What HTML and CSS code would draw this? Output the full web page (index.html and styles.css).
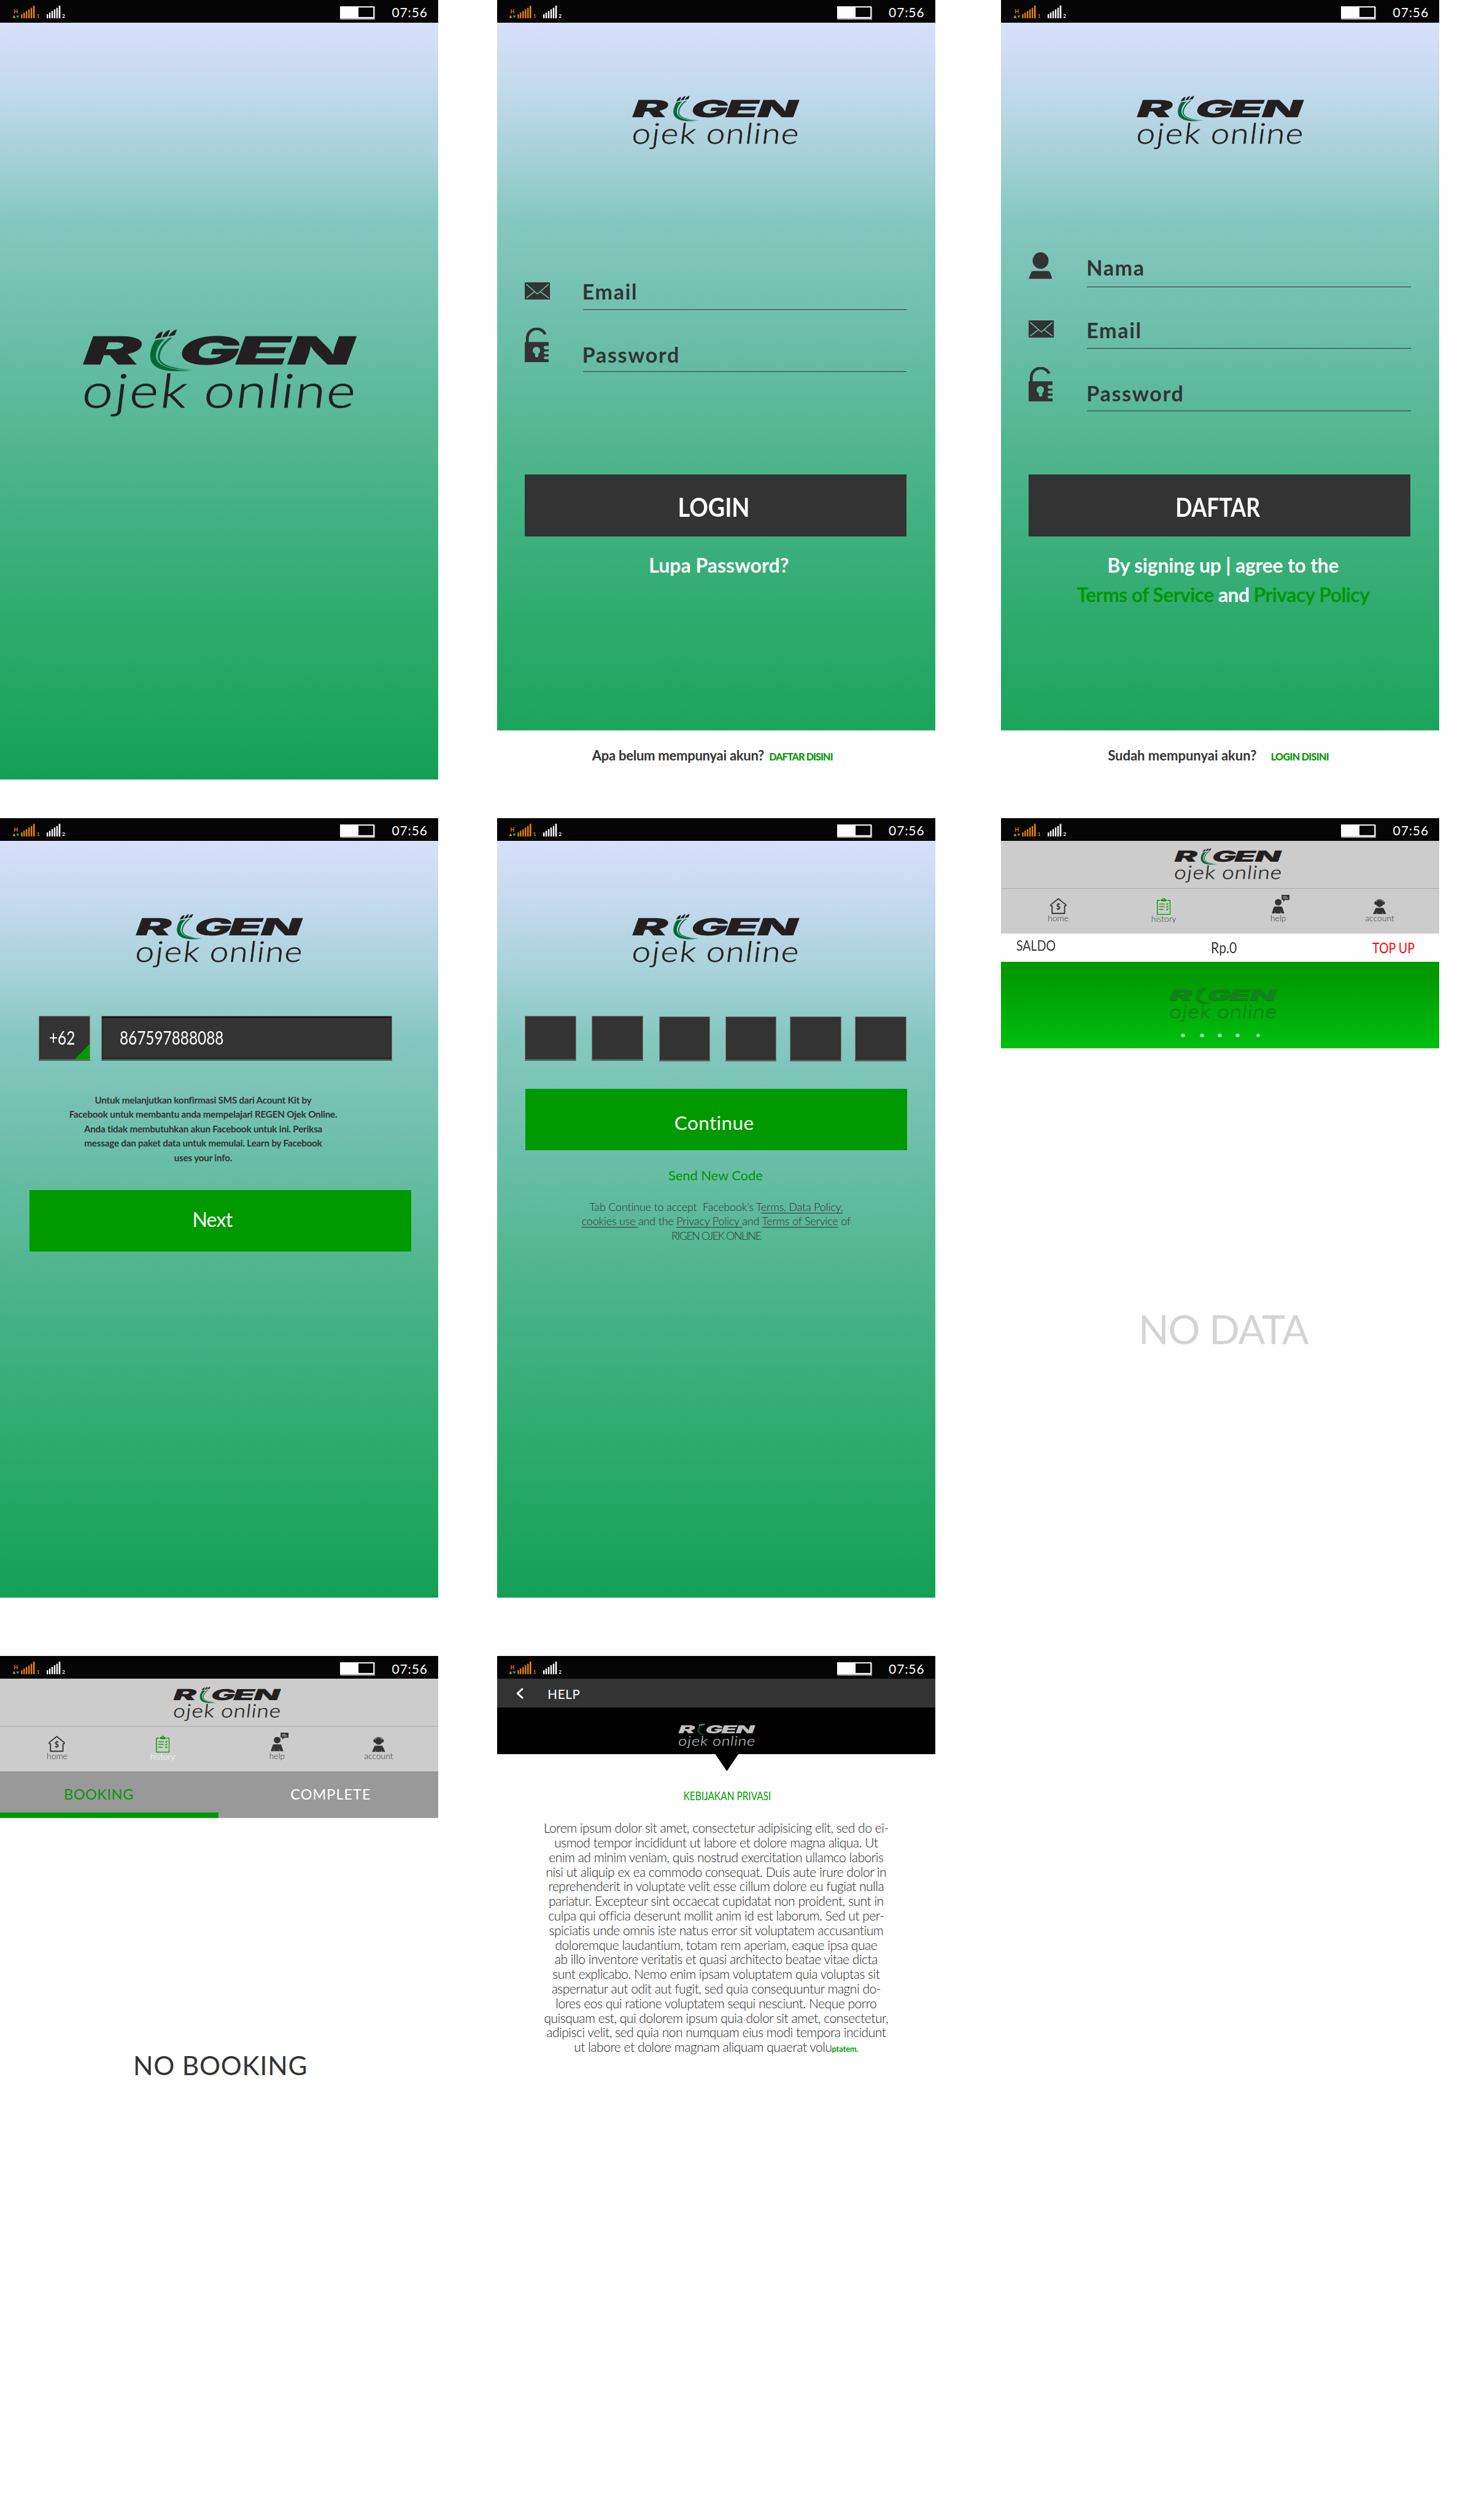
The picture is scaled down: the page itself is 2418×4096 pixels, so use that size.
FILE: index.html
```html
<!DOCTYPE html>
<html lang="id">
<head>
<meta charset="utf-8">
<title>RIGEN Ojek Online</title>
<link rel="stylesheet" href="styles.css">
</head>
<body>
<svg class="defs" aria-hidden="true">
  <symbol id="logo" viewBox="24.8 32.5 674.5 215.5" overflow="visible">
    <g class="logo-word">
      <text transform="translate(14.5 118.7) skewX(-20) scale(2.28 1)">R</text>
      <text transform="translate(251 118.7) skewX(-20) scale(2.1 1)">G</text>
      <text transform="translate(389.6 118.7) skewX(-20) scale(2.31 1)">E</text>
      <text transform="translate(518.2 118.7) skewX(-20) scale(2.25 1)">N</text>
    </g>
    <g transform="scale(.4591 .3333)">
      <path fill="currentColor" d="M440 166Q455 118 483 111L473 156ZM479 155Q497 105 523 99L507 147ZM514 148Q532 103 559 98L547 138Z"/>
      <path class="logo-foot" d="M444 175L494 167Q448 220 446 290Q446 394 640 401Q600 404 560 405Q415 405 415 290Q416 230 444 175ZM516 160L536 155Q470 220 466 298Q466 380 640 394Q456 395 456 295Q460 220 516 160Z"/>
    </g>
    <g class="logo-sub">
      <text transform="translate(20 225) skewX(-7) scale(1.17 1)" textLength="219">ojek</text>
      <text transform="translate(320 225) skewX(-7) scale(1.17 1)" textLength="318">online</text>
    </g>
  </symbol>
  <symbol id="signal" viewBox="25 12 140 36" overflow="visible">
    <text x="33.4" y="33" class="sig" font-size="13" fill="#ea8408" textLength="10" lengthAdjust="spacingAndGlyphs">H</text>
    <path fill="#ea8408" d="M30 44l4-7 4 7zM51.2 35h3.6v10h-3.6zM57 31h3.6v14H57zM63 27h3.6v18H63zM69 23h3.6v22H69zM75 19h3.6v26H75zM80.9 14h4v31h-4z"/>
    <path fill="#14b45a" d="M39 38h8l-4 7z"/>
    <text x="89.5" y="44" class="sig" font-size="12" fill="#ea8408">1</text>
    <path fill="#fff" d="M114.3 35h3.6v10h-3.6zM120.1 31h3.6v14h-3.6zM126.1 27h3.6v18h-3.6zM132.1 23h3.6v22h-3.6zM138.1 19h3.6v26h-3.6zM144 14h4v31h-4z"/>
    <text x="152.5" y="44" class="sig" font-size="12" fill="#fff">2</text>
  </symbol>
  <symbol id="battery" viewBox="836 13 88 36">
    <path fill="#8a8a8a" d="M838 16h86v32h-86z"/>
    <path fill="#fdfdfd" d="M837.5 15h84.5v30h-84.5z"/>
    <path fill="#050505" d="M883 18h36.5v23.5H883z"/>
  </symbol>
  <symbol id="mail" viewBox="0 0 89 60">
    <rect width="89" height="60" rx="2" fill="#333"/>
    <path d="M6 7L44.5 41L83 7M6 54L34 33M83 54L55 33" fill="none" stroke="#74c0b1" stroke-width="3.2" stroke-linecap="round"/>
  </symbol>
  <symbol id="lock" viewBox="0 0 84 121">
    <path d="M9 52V38A33 33 0 0 1 72 23" fill="none" stroke="#333" stroke-width="10"/>
    <path fill="#333" fill-rule="evenodd" d="M2 50H82Q84 50 84 52V64H72Q67 64 67 70T72 76H84V83H72Q67 83 67 88T72 93H84V101H72Q67 101 67 106T72 111H84V121H0V52Q0 50 2 50ZM36 92Q28 88 28 80A13 13 0 0 1 54 80Q54 88 48 92V99Q48 104 42 104T36 99Z"/>
  </symbol>
  <symbol id="person" viewBox="0 0 83 94">
    <ellipse cx="42" cy="29" rx="28" ry="29" fill="#333"/>
    <path fill="#333" d="M0 94L8 73Q11 66 18 66H66Q73 66 76 73L83 94Z"/>
  </symbol>
  <symbol id="home" viewBox="0 0 58 57" overflow="visible">
    <path d="M7 54.5V29L2.5 27.5V24L29 2.7L55.5 24V27.5L51 29V54.5Z" fill="none" stroke="#333" stroke-width="4" stroke-linejoin="round"/>
    <text x="29" y="42" text-anchor="middle" class="sig" font-size="27" fill="#333">$</text>
  </symbol>
  <symbol id="history" viewBox="0 0 48 59">
    <path d="M11 8.5H1.5V57.5H46.5V8.5H37" fill="none" stroke="#090" stroke-width="3"/>
    <path fill="#090" fill-rule="evenodd" d="M14 5H19Q20 0 24 0T29 5H34V9Q34 12 30 12H18Q14 12 14 9ZM22 4.5a2 2 0 1 0 4 0a2 2 0 1 0-4 0Z"/>
    <path d="M8 21H28M8 30.5H28M8 40H23M33 20l3 3 4-5M33 29.5l3 3 4-5M33 39l3 3 4-5" fill="none" stroke="#090" stroke-width="2.6"/>
  </symbol>
  <symbol id="help" viewBox="0 0 63 66">
    <ellipse cx="23" cy="26" rx="12" ry="11.5" fill="#333"/>
    <path fill="#333" d="M11 41H34Q37 41 38 45L45 66H34L31.5 56V66H13V56L11 66H0L7 45Q8 41 11 41ZM35 0H63V18H47L41 25V18H35Z"/>
    <path d="M40 6.5H53M40 11.5H58" stroke="#ccc" stroke-width="2.2"/>
  </symbol>
  <symbol id="account" viewBox="0 0 47 55">
    <ellipse cx="23.5" cy="17" rx="13" ry="12.5" fill="#333"/>
    <path d="M8 12A16 11.500 0 0 1 39 12" fill="none" stroke="#333" stroke-width="2"/>
    <path fill="#333" d="M11 9.5Q5 10 5 15.5T11 22ZM36 9.5Q42 10 42 15.5T36 22ZM12 33H35Q38 33 39 37L47 55H36L33.5 47V55H13.5V47L11 55H0L8 37Q9 33 12 33Z"/>
  </symbol>
</svg>

<main class="board">
  <section class="screen sky">
    <div class="status"><svg class="signal"><use href="#signal"/></svg><svg class="battery"><use href="#battery"/></svg><time>07:56</time></div>
    <svg class="logo logo-splash"><use href="#logo"/></svg>
  </section>

  <section class="screen sky">
    <div class="status"><svg class="signal"><use href="#signal"/></svg><svg class="battery"><use href="#battery"/></svg><time>07:56</time></div>
    <svg class="logo logo-top"><use href="#logo"/></svg>
    <form class="form login-form">
      <div class="row row-a"><svg class="mail"><use href="#mail"/></svg><label>Email</label></div>
      <div class="row row-b"><svg class="lock"><use href="#lock"/></svg><label>Password</label></div>
    </form>
    <div class="btn btn-dark login-btn"><span class="squeeze-90">LOGIN</span></div>
    <p class="forgot">Lupa Password?</p>
    <footer class="foot foot-login"><span>Apa belum mempunyai akun?</span><b>DAFTAR DISINI</b></footer>
  </section>

  <section class="screen sky">
    <div class="status"><svg class="signal"><use href="#signal"/></svg><svg class="battery"><use href="#battery"/></svg><time>07:56</time></div>
    <svg class="logo logo-top"><use href="#logo"/></svg>
    <form class="form signup-form">
      <div class="row row-c"><svg class="person"><use href="#person"/></svg><label>Nama</label></div>
      <div class="row row-d"><svg class="mail"><use href="#mail"/></svg><label>Email</label></div>
      <div class="row row-e"><svg class="lock"><use href="#lock"/></svg><label>Password</label></div>
    </form>
    <div class="btn btn-dark signup-btn"><span class="squeeze-88">DAFTAR</span></div>
    <p class="agree">By signing up | agree to the<br><span class="links"><i>Terms of Service</i> and <i>Privacy Policy</i></span></p>
    <footer class="foot foot-signup"><span>Sudah mempunyai akun?</span><b>LOGIN DISINI</b></footer>
  </section>

  <section class="screen sky">
    <div class="status"><svg class="signal"><use href="#signal"/></svg><svg class="battery"><use href="#battery"/></svg><time>07:56</time></div>
    <svg class="logo logo-top"><use href="#logo"/></svg>
    <div class="phone">
      <div class="box code"><span>+62</span></div>
      <div class="box number"><span>867597888088</span></div>
    </div>
    <p class="note">Untuk melanjutkan konfirmasi SMS dari Acount Kit by<br>Facebook untuk membantu anda mempelajari REGEN Ojek Online.<br>Anda tidak membutuhkan akun Facebook untuk ini. Periksa<br>message dan paket data untuk memulai. Learn by Facebook<br>uses your info.</p>
    <div class="btn btn-green next-btn">Next</div>
  </section>

  <section class="screen sky">
    <div class="status"><svg class="signal"><use href="#signal"/></svg><svg class="battery"><use href="#battery"/></svg><time>07:56</time></div>
    <svg class="logo logo-top"><use href="#logo"/></svg>
    <div class="pins"><div class="box"></div><div class="box"></div><div class="box"></div><div class="box"></div><div class="box"></div><div class="box"></div></div>
    <div class="btn btn-green continue-btn">Continue</div>
    <p class="resend">Send New Code</p>
    <p class="terms">Tab Continue to accept&nbsp; Facebook’s T<u>erms, Data Policy,</u><br><u>cookies use </u>and the <u>Privacy Policy </u>and <u>Terms of Service</u> of<br><span class="tight">RIGEN OJEK ONLINE</span></p>
  </section>

  <section class="screen">
    <div class="status"><svg class="signal"><use href="#signal"/></svg><svg class="battery"><use href="#battery"/></svg><time>07:56</time></div>
    <header class="brand"><svg class="logo"><use href="#logo"/></svg></header>
    <nav class="tabs-nav">
      <div class="item home"><svg><use href="#home"/></svg>home</div>
      <div class="item history"><svg><use href="#history"/></svg>history</div>
      <div class="item help"><svg><use href="#help"/></svg>help</div>
      <div class="item account"><svg><use href="#account"/></svg>account</div>
    </nav>
    <div class="saldo"><span class="s1">SALDO</span><span class="s2">Rp.0</span><span class="s3">TOP UP</span></div>
    <div class="banner">
      <svg class="logo"><use href="#logo"/></svg>
      <div class="dots"><i></i><i></i><i></i><i></i><i></i></div>
    </div>
    <p class="no-data">NO DATA</p>
  </section>

  <section class="screen">
    <div class="status"><svg class="signal"><use href="#signal"/></svg><svg class="battery"><use href="#battery"/></svg><time>07:56</time></div>
    <header class="brand"><svg class="logo"><use href="#logo"/></svg></header>
    <nav class="tabs-nav">
      <div class="item home"><svg><use href="#home"/></svg>home</div>
      <div class="item history active"><svg><use href="#history"/></svg>history</div>
      <div class="item help"><svg><use href="#help"/></svg>help</div>
      <div class="item account"><svg><use href="#account"/></svg>account</div>
    </nav>
    <div class="switch"><div class="tab on">BOOKING</div><div class="tab off">COMPLETE</div></div>
    <p class="no-booking">NO BOOKING</p>
  </section>

  <section class="screen">
    <div class="status"><svg class="signal"><use href="#signal"/></svg><svg class="battery"><use href="#battery"/></svg><time>07:56</time></div>
    <header class="titlebar"><svg viewBox="0 0 12 18"><path d="M10 1.8L2.2 9L10 16.2" fill="none" stroke="#fff" stroke-width="3" stroke-linecap="round" stroke-linejoin="round"/></svg><span>HELP</span></header>
    <div class="hero"><svg class="logo"><use href="#logo"/></svg></div>
    <div class="pointer"></div>
    <h1 class="policy-title"><span>KEBIJAKAN PRIVASI</span></h1>
    <p class="policy">Lorem ipsum dolor sit amet, consectetur adipisicing elit, sed do ei-<br>usmod tempor incididunt ut labore et dolore magna aliqua. Ut<br>enim ad minim veniam, quis nostrud exercitation ullamco laboris<br>nisi ut aliquip ex ea commodo consequat. Duis aute irure dolor in<br>reprehenderit in voluptate velit esse cillum dolore eu fugiat nulla<br>pariatur. Excepteur sint occaecat cupidatat non proident, sunt in<br>culpa qui officia deserunt mollit anim id est laborum. Sed ut per-<br>spiciatis unde omnis iste natus error sit voluptatem accusantium<br>doloremque laudantium, totam rem aperiam, eaque ipsa quae<br>ab illo inventore veritatis et quasi architecto beatae vitae dicta<br>sunt explicabo. Nemo enim ipsam voluptatem quia voluptas sit<br>aspernatur aut odit aut fugit, sed quia consequuntur magni do-<br>lores eos qui ratione voluptatem sequi nesciunt. Neque porro<br>quisquam est, qui dolorem ipsum quia dolor sit amet, consectetur,<br>adipisci velit, sed quia non numquam eius modi tempora incidunt<br>ut labore et dolore magnam aliquam quaerat volu<b>ptatem.</b></p>
  </section>
</main>
</body>
</html>
```
FILE: styles.css
```css
* { box-sizing: border-box; margin: 0; padding: 0; }
body { background: #fff; font-family: Lato, "Open Sans", sans-serif; font-variant-ligatures: none; color: #333; }
svg { display: block; flex: none; overflow: visible; }
i { font-style: normal; }
.defs { position: absolute; width: 0; height: 0; }

.board {
  width: 2418px;
  height: 4096px;
  display: grid;
  grid-template-columns: 809.7px 821.5px 714.3px;
  grid-template-rows: 1270px 1270px 1270px;
  justify-content: start;
  align-content: start;
  row-gap: 63.3px;
}
.screen { width: 714.3px; height: 1270px; display: flex; flex-direction: column; white-space: nowrap; }
.screen:nth-child(n+7) { margin-top: 31.9px; }
.sky {
  background: linear-gradient(#d8e0fb 37px, #c6daef 132px, #a9d2da 245px, #85c8bf 357px, #77c2b3 463px, #5ab999 661px, #3fb07f 860px, #2fac70 992px, #1ba45b 1190px, #159f56 1270px);
}

/* status bar */
.status { flex: none; height: 37px; background: #050505; display: flex; align-items: flex-start; color: #fff; }
.signal { width: 92.6px; height: 23.8px; margin: 7.9px 0 0 16.5px; }
.battery { width: 58.2px; height: 23.8px; margin: 8.6px 0 0 443.8px; }
.status time { font-size: 21px; line-height: 21px; letter-spacing: .9px; margin: 9.2px 0 0 27.3px; }
.sig { font-family: Lato, sans-serif; font-weight: 700; }

/* logo */
.logo { color: #231f20; --foot: #056839; }
.logo-word { font: 900 96px Inter, sans-serif; fill: currentColor; }
.logo-sub { font: 300 115px Lato, sans-serif; fill: currentColor; stroke: currentColor; stroke-width: 1.6px; }
.logo-foot { fill: var(--foot); }
.logo-splash { width: 446.1px; height: 142.5px; margin: 500.4px 0 0 135.4px; }
.logo-top { width: 272.8px; height: 87px; margin: 119.2px 0 0 220.8px; }

/* forms */
.form { padding-left: 45px; }
.login-form { margin-top: 193.8px; }
.signup-form { margin-top: 155.8px; }
.row { display: flex; align-items: flex-end; }
.row label { margin-left: auto; margin-right: 46.7px; width: 527.6px; border-bottom: 1px solid #333; font-weight: 700; font-size: 34px; line-height: 34px; letter-spacing: 1.7px; }
.login-form label { text-indent: -1px; }
.mail { width: 41.3px; height: 28px; }
.lock { width: 39px; height: 56px; }
.person { width: 38.6px; height: 43.6px; }
.row-a { height: 68px; } .row-a svg { margin-bottom: 17.4px; } .row-a label { padding-bottom: 11.6px; }
.row-b { height: 101px; } .row-b svg { margin-bottom: 15.6px; } .row-b label { padding-bottom: 10.2px; }
.row-c { height: 69px; } .row-c svg { margin-bottom: 13.7px; } .row-c label { padding-bottom: 13.9px; }
.row-d { height: 100px; } .row-d svg { margin-bottom: 18px; } .row-d label { padding-bottom: 11.5px; }
.row-e { height: 102px; } .row-e svg { margin-bottom: 15.7px; } .row-e label { padding-bottom: 10.9px; }
.signup-form label { text-indent: -1px; }

.btn { flex: none; width: 622.2px; height: 100.4px; line-height: 100.4px; margin-left: 45px; text-align: center; color: #fff; }
.btn span { display: inline-block; }
.btn-dark { background: #333; font-weight: 700; font-size: 42px; padding: 2.8px 6px 0 0; }
.btn-green { background: #090; }
.login-btn { margin-top: 167.3px; }
.signup-btn { margin-top: 103.3px; }
.squeeze-90 { transform: scaleX(.9); }
.squeeze-88 { transform: scaleX(.85); }

.forgot { margin-top: 31.4px; padding-left: 9px; text-align: center; font-weight: 700; font-size: 32px; line-height: 32px; color: #fff; }
.agree { margin-top: 22.9px; padding-left: 9px; text-align: center; font-weight: 700; font-size: 32px; line-height: 48.7px; letter-spacing: -.25px; color: #fff; }
.agree .links { letter-spacing: -.63px; }
.agree i { color: #090; }
.foot { flex: none; margin-top: auto; height: 80.2px; background: #fff; display: flex; align-items: baseline; padding-top: 30.3px; font-weight: 700; font-size: 22px; line-height: 22px; }
.foot b { font-size: 16px; color: #090; }
.foot-login { padding-left: 155px; letter-spacing: -.25px; }
.foot-login span { width: 288.5px; }
.foot-login b { letter-spacing: -.8px; }
.foot-signup { padding-left: 174px; }
.foot-signup span { width: 265.5px; }
.foot-signup b { letter-spacing: -.6px; }

/* phone and code entry */
.box { position: relative; height: 72px; background: #333; border: 1.5px solid #827c7d; box-shadow: 0 1px 0 #333; }
.phone { display: flex; gap: 18.2px; margin: 78.4px 0 0 63.1px; font-size: 31px; line-height: 69px; color: #fff; }
.phone span { display: inline-block; transform: scaleX(.785); transform-origin: 0 50%; }
.code { width: 83.9px; padding-left: 15.5px; }
.code::after { content: ""; position: absolute; right: 0; bottom: 0; width: 24.6px; height: 25px; background: #090; clip-path: polygon(100% 0, 100% 100%, 0 100%); }
.number { width: 473.7px; padding-left: 29px; box-shadow: 0 1px 0 #333, inset 0 2px 2px #111, inset 0 -2px 2px #222; }
.note { width: 662px; margin-top: 54px; text-align: center; font-weight: 700; font-size: 15.2px; line-height: 23.5px; letter-spacing: -.2px; }
.next-btn { margin: 40.2px 0 0 47.8px; font-size: 32px; line-height: 95px; letter-spacing: -.8px; padding-right: 26px; }

.pins { display: grid; grid-template-columns: 109px 109.5px 108.1px 105.3px 106.3px 83.6px; margin: 78.1px 0 0 45.5px; height: 73px; }
.pins .box { width: 83.6px; }
.pins .box:nth-child(n+3) { margin-top: 1px; }
.continue-btn { margin: 46.3px 0 0 45.9px; font-size: 31.5px; letter-spacing: .4px; padding: 5px 6px 0 0; }
.resend { margin-top: 29.9px; padding-right: 2px; text-align: center; font-size: 22px; line-height: 22px; letter-spacing: -.1px; color: #090; }
.terms { margin-top: 28.6px; text-align: center; font-weight: 300; font-size: 18px; line-height: 23.5px; letter-spacing: -.2px; }
.terms u { text-underline-offset: 3px; text-decoration-thickness: 1px; text-decoration-skip-ink: none; }
.terms .tight { letter-spacing: -1.5px; }

/* home and history */
.brand { flex: none; height: 77.6px; background: #ccc; border-bottom: 1px solid #b0a8a8; padding: 12.1px 0 0 281.6px; }
.brand .logo, .banner .logo { width: 176.3px; height: 56px; }
.tabs-nav { flex: none; height: 73.1px; background: #ccc; display: grid; grid-template-columns: 185.8px 158.4px 214.6px 116.4px; font-weight: 300; font-size: 13.8px; line-height: 13.8px; }
.item { display: flex; flex-direction: column; align-items: center; }
.home { padding-top: 15px; } .home svg { width: 26.9px; height: 26.4px; }
.history { padding-top: 14.7px; } .history svg { width: 22.3px; height: 27.5px; }
.help { padding-top: 10.3px; } .help svg { width: 29.2px; height: 30.6px; margin: 0 0 .5px 8px; }
.account { padding-top: 15.8px; } .account svg { width: 21.8px; height: 25.6px; }
.history.active { color: #fff; }
.saldo { flex: none; height: 46.5px; display: grid; grid-template-columns: 317px 263px auto; padding-left: 24.5px; font-size: 23px; line-height: 23px; }
.saldo span { transform: scaleX(.85); transform-origin: 0 0; }
.s1 { padding-top: 7.6px; }
.s2 { padding-top: 10.2px; font-size: 25px; line-height: 25px; }
.s3 { padding-top: 12px; color: #f00; }
.banner { flex: none; height: 140.7px; padding-top: 40.8px; background: linear-gradient(#090 15%, #00bd10 95%); }
.banner .logo { margin-left: 274.2px; color: #1f7423; --foot: #1f7423; filter: drop-shadow(0 1px 0 rgba(0, 60, 0, .5)); opacity: .7; }
.dots { display: grid; grid-template-columns: 31px 28.7px 29.3px 33.4px 6.5px; margin: 19.6px 0 0 293.3px; }
.dots i { width: 6.6px; height: 6.6px; border-radius: 50%; background: #8fdc90; }
.no-data { margin-top: 425px; padding-left: 10px; text-align: center; font-size: 65px; line-height: 65px; letter-spacing: -1px; color: #d4d4d4; }

.switch { flex: none; height: 75.4px; background: #999; display: flex; font-size: 23.5px; line-height: 23px; }
.tab { padding-top: 25.5px; }
.on { width: 356.3px; padding-left: 104px; letter-spacing: .5px; color: #090; border-bottom: 9.9px solid #090; }
.off { padding-left: 117px; letter-spacing: 1px; color: #fff; }
.no-booking { margin-top: 382.6px; padding-left: 4px; text-align: center; font-size: 42.5px; line-height: 42px; letter-spacing: .8px; color: #333; }

/* help page */
.titlebar { flex: none; height: 47px; background: #333; color: #fff; display: flex; padding: 14.3px 0 0 31px; font-size: 20.5px; line-height: 20px; letter-spacing: .8px; }
.titlebar svg { width: 12px; height: 18px; margin-top: .5px; }
.titlebar span { margin-left: 39.5px; }
.hero { flex: none; height: 75.4px; background: #000; padding: 25.1px 0 0 295.6px; }
.hero .logo { width: 126.2px; height: 40px; color: #bfbfbf; --foot: #06492b; }
.pointer { flex: none; width: 37.5px; height: 27.8px; margin-left: 355.9px; background: #000; clip-path: polygon(0 0, 100% 0, 50% 100%); }
.policy-title { margin-top: 30.8px; padding-left: 35.9px; text-align: center; font-weight: 400; font-size: 19.3px; line-height: 19.3px; color: #090; }
.policy-title span { display: inline-block; transform: scaleX(.8); }
.policy { margin-top: 30.6px; text-align: center; font-weight: 300; font-size: 21px; line-height: 23.78px; letter-spacing: -.47px; color: #222; }
.policy b { font-weight: 700; font-size: 12.6px; line-height: 1; letter-spacing: 0; color: #090; }
```
